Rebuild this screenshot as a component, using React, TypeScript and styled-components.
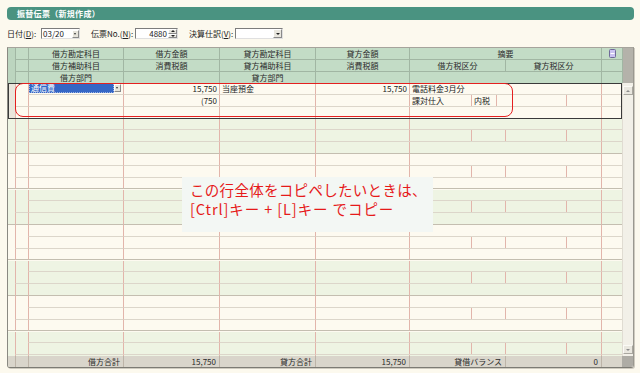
import styled, { createGlobalStyle } from "styled-components";

const GlobalStyle = createGlobalStyle`
  html, body {
    margin: 0;
    padding: 0;
    background: #fcf9ee;
  }
  body {
    font-family: "Noto Sans CJK JP", "Noto Sans", sans-serif;
    color: #222;
  }
`;

const COLS = "7px 13px 95px 96px 96px 94px 192px 21px";

type Entry = {
  debitAmt?: string;
  credit?: string;
  creditAmt?: string;
  memo?: string;
  taxAmt?: string;
  tax?: string;
  taxIn?: string;
};

const first: Entry = {
  debitAmt: "15,750",
  credit: "当座預金",
  creditAmt: "15,750",
  memo: "電話料金3月分",
  taxAmt: "(750",
  tax: "課対仕入",
  taxIn: "内税",
};

const Underline = ({ c }: { c: string }) => <u>{c}</u>;

const GroupRow = ({ entry, shade, selected }: { entry?: Entry; shade: boolean; selected?: boolean }) => (
  <Group $shade={shade} $selected={selected}>
    <Gutter $selected={selected} />
    <Mark $span />
    <Cell>
      {selected && (
        <Picker>
          <PickValue>通信費</PickValue>
          <DropBtn />
        </Picker>
      )}
    </Cell>
    <Cell $align="right">{entry?.debitAmt}</Cell>
    <Cell>{entry?.credit}</Cell>
    <Cell $align="right">{entry?.creditAmt}</Cell>
    <Cell>{entry?.memo}</Cell>
    <Cell />

    <Cell />
    <Cell $align="right">{entry?.taxAmt}</Cell>
    <Cell />
    <Cell />
    <Split>
      <SubCell $w={62}>{entry?.tax}</SubCell>
      <SubCell $w={selected ? 25 : 34}>{entry?.taxIn}</SubCell>
      <SubCell $w={selected ? 70 : 61} />
      <SubCell $w={35} />
    </Split>
    <Cell />

    <Mark $edge="group" />
    <Cell $edge="group" />
    <Cell $edge="group" />
    <Cell $edge="group" />
    <Cell $edge="group" />
    <Cell $edge="group" />
    <Cell $edge="group" />
  </Group>
);

export default function App() {
  const groups = [0, 1, 2, 3, 4, 5, 6, 7];
  return (
    <Page>
      <GlobalStyle />
      <TitleBar>振替伝票（新規作成）</TitleBar>

      <FormRow>
        <Label $w={34}>
          日付(<Underline c="D" />):
        </Label>
        <Input $w={39}>
          <InputText>03/20</InputText>
          <DropBtn />
        </Input>
        <Label $w={44} $gap={11}>
          伝票No.(<Underline c="N" />):
        </Label>
        <Input $w={43}>
          <InputText $align="right">4880</InputText>
          <Spinner>
            <SpinHalf>
              <Arrow $up />
            </SpinHalf>
            <SpinHalf>
              <Arrow />
            </SpinHalf>
          </Spinner>
        </Input>
        <Label $w={46} $gap={11}>
          決算仕訳(<Underline c="V" />):
        </Label>
        <Input $w={48}>
          <InputText />
          <SelectBtn>
            <Arrow />
          </SelectBtn>
        </Input>
      </FormRow>

      <Frame>
        <HeaderGrid>
          <HGutter />
          <HCell />
          <HCell>借方勘定科目</HCell>
          <HCell>借方金額</HCell>
          <HCell>貸方勘定科目</HCell>
          <HCell>貸方金額</HCell>
          <HCell>摘要</HCell>
          <HCell>
            <svg width="7" height="9" viewBox="0 0 7 9">
              <rect x="0.5" y="0.5" width="6" height="8" rx="1" fill="#cbc3f2" stroke="#6f6a98" />
              <line x1="1.5" y1="4.5" x2="5.5" y2="4.5" stroke="#ffffff" />
            </svg>
          </HCell>
          <HScroll />

          <HCell />
          <HCell>借方補助科目</HCell>
          <HCell>消費税額</HCell>
          <HCell>貸方補助科目</HCell>
          <HCell>消費税額</HCell>
          <HSplit>
            <HSub>借方税区分</HSub>
            <HSub>貸方税区分</HSub>
          </HSplit>
          <HCell />

          <HCell $last />
          <HCell $last>借方部門</HCell>
          <HCell $last />
          <HCell $last>貸方部門</HCell>
          <HCell $last />
          <HCell $last />
          <HCell $last />
        </HeaderGrid>

        <Body>
          <Rows>
            {groups.map((g) => (
              <GroupRow key={g} shade={g % 2 === 1} selected={g === 0} entry={g === 0 ? first : undefined} />
            ))}
          </Rows>
          <Scrollbar>
            <ScrollBtn>
              <Arrow $up $light />
            </ScrollBtn>
            <ScrollBtn>
              <Arrow $light />
            </ScrollBtn>
          </Scrollbar>
        </Body>

        <Footer>
          <FCell $noLine />
          <FCell />
          <FCell>借方合計</FCell>
          <FCell>15,750</FCell>
          <FCell>貸方合計</FCell>
          <FCell>15,750</FCell>
          <FCell>貸借バランス</FCell>
          <FCell>0</FCell>
          <FCell />
          <FScroll />
        </Footer>

        <Highlight />
        <Callout>
          <CalloutLine>この行全体をコピペしたいときは、</CalloutLine>
          <CalloutLine $wide>[Ctrl]キー + [L]キー でコピー</CalloutLine>
        </Callout>
      </Frame>
    </Page>
  );
}

const Page = styled.div`
  width: 640px;
  height: 373px;
  box-sizing: border-box;
  padding: 7px 6px 0 7px;
  overflow: hidden;
`;

const TitleBar = styled.div`
  height: 13px;
  width: 627px;
  border-radius: 4px;
  background: #4a9381;
  color: #fff;
  font-size: 8px;
  font-weight: bold;
  line-height: 13px;
  padding-left: 10px;
  box-sizing: border-box;
  letter-spacing: 0.3px;
`;

const FormRow = styled.div`
  display: flex;
  align-items: center;
  height: 11px;
  margin-top: 8px;
  font-size: 8px;
`;

const Label = styled.span<{ $w: number; $gap?: number }>`
  width: ${(p) => p.$w}px;
  margin-left: ${(p) => p.$gap || 0}px;
  white-space: nowrap;
  color: #222;
  line-height: 11px;
`;

const Input = styled.div<{ $w: number }>`
  width: ${(p) => p.$w}px;
  height: 11px;
  box-sizing: border-box;
  display: flex;
  background: #fff;
  border: 1px solid;
  border-color: #7c7c7c #e0e0e0 #e0e0e0 #7c7c7c;
`;

const InputText = styled.span<{ $align?: string }>`
  flex: 1;
  font-size: 8px;
  line-height: 9px;
  padding: 0 1px;
  text-align: ${(p) => p.$align || "left"};
`;

const DropBtn = styled.span`
  width: 7px;
  height: 8px;
  margin: 0 0 0 auto;
  align-self: center;
  box-sizing: border-box;
  background: #e6e4dc;
  border: 1px solid;
  border-color: #fff #8a8a8a #8a8a8a #fff;
  position: relative;
  &::after {
    content: "";
    position: absolute;
    left: 1px;
    top: 2px;
    border-left: 1.5px solid transparent;
    border-right: 1.5px solid transparent;
    border-top: 2px solid #333;
  }
`;

const Spinner = styled.div`
  width: 9px;
  display: flex;
  flex-direction: column;
`;

const SpinHalf = styled.div`
  flex: 1;
  display: flex;
  align-items: center;
  justify-content: center;
  background: #e8e6de;
  border: 1px solid;
  border-color: #fff #8a8a8a #8a8a8a #fff;
  box-sizing: border-box;
`;

const SelectBtn = styled.div`
  width: 9px;
  display: flex;
  align-items: center;
  justify-content: center;
  background: #e8e6de;
  border: 1px solid;
  border-color: #fff #8a8a8a #8a8a8a #fff;
  box-sizing: border-box;
`;

const Arrow = styled.span<{ $up?: boolean; $light?: boolean }>`
  width: 0;
  height: 0;
  border-left: 2px solid transparent;
  border-right: 2px solid transparent;
  ${(p) => (p.$up ? "border-bottom" : "border-top")}: 2px solid ${(p) => (p.$light ? "#8c8c8c" : "#222")};
`;

const Frame = styled.div`
  position: relative;
  margin-top: 8px;
  width: 627px;
  height: 321px;
  box-sizing: border-box;
  border-top: 1px solid #a6a49c;
  border-left: 1px solid #8a8982;
  border-right: 1px solid #9a9890;
  border-bottom: 1px solid #7c7b74;
  border-radius: 0 0 3px 3px;
  box-shadow: 1px 1px 0 #cfcbc0;
  display: flex;
  flex-direction: column;
`;

const HeaderGrid = styled.div`
  display: grid;
  grid-template-columns: ${COLS} 11px;
  grid-template-rows: 12px 12px 11px;
  background: #c3dcc6;
  font-size: 8px;
  color: #2a2a2a;
`;

const HGutter = styled.div`
  grid-row: span 3;
  background: #bcd5bf;
`;

const HCell = styled.div<{ $last?: boolean }>`
  border-left: 1px solid #a1b6a3;
  border-bottom: ${(p) => (p.$last ? "none" : "1px solid #a1b6a3")};
  display: flex;
  align-items: center;
  justify-content: center;
  line-height: 11px;
  white-space: nowrap;
  overflow: hidden;
`;

const HScroll = styled.div`
  grid-row: span 3;
  background: #b4b2aa;
  border-left: 1px solid #a1b6a3;
`;

const HSplit = styled.div`
  display: flex;
  border-bottom: 1px solid #a1b6a3;
`;

const HSub = styled.div`
  flex: 1;
  border-left: 1px solid #a1b6a3;
  display: flex;
  align-items: center;
  justify-content: center;
  white-space: nowrap;
`;

const Body = styled.div`
  display: flex;
  height: 273px;
`;

const Rows = styled.div`
  width: 614px;
  overflow: hidden;
  display: flex;
  flex-direction: column;
`;

const Group = styled.div<{ $shade: boolean; $selected?: boolean }>`
  flex-shrink: 0;
  height: 35.5px;
  box-sizing: border-box;
  display: grid;
  grid-template-columns: ${COLS};
  grid-template-rows: repeat(3, 1fr);
  background: ${(p) => (p.$shade ? "#eef4e3" : "#fdfaf0")};
  font-size: 8px;
  color: #222;
  ${(p) => p.$selected && "outline: 1px solid #3a3a3a; outline-offset: -1px;"}
`;

const Gutter = styled.div<{ $selected?: boolean }>`
  grid-row: span 3;
  border-bottom: 1px solid #c4beb0;
  background: ${(p) => (p.$selected ? "#e9e6dc" : "transparent")};
`;

const Mark = styled.div<{ $span?: boolean; $edge?: string }>`
  grid-row: ${(p) => (p.$span ? "span 2" : "auto")};
  border-left: 1px solid #e2b5ab;
  border-bottom: 1px solid ${(p) => (p.$edge === "group" ? "#c4beb0" : "#dcd6ca")};
`;

const Cell = styled.div<{ $edge?: string; $align?: string }>`
  border-left: 1px solid #e2b5ab;
  border-bottom: 1px solid ${(p) => (p.$edge === "group" ? "#c4beb0" : "#dcd6ca")};
  padding: 0 2px;
  text-align: ${(p) => p.$align || "left"};
  line-height: 11px;
  white-space: nowrap;
  overflow: hidden;
  display: flex;
  align-items: center;
  justify-content: ${(p) => (p.$align === "right" ? "flex-end" : "flex-start")};
`;

const Split = styled.div`
  display: flex;
  border-bottom: 1px solid #dcd6ca;
`;

const SubCell = styled.div<{ $w: number }>`
  width: ${(p) => p.$w}px;
  box-sizing: border-box;
  border-left: 1px solid #e2b5ab;
  padding: 0 2px;
  display: flex;
  align-items: center;
  white-space: nowrap;
  overflow: hidden;
`;

const Picker = styled.div`
  display: flex;
  align-items: center;
  width: 94px;
  height: 10px;
  margin-left: -2px;
`;

const PickValue = styled.span`
  flex: 1;
  height: 10px;
  background: #3466c5;
  color: #fff;
  line-height: 10px;
  padding-left: 2px;
  outline: 1px dotted #9db4e4;
  outline-offset: -1px;
`;

const Scrollbar = styled.div`
  width: 11px;
  box-sizing: border-box;
  border-left: 1px solid #e0dcd2;
  background: #f2f0e8;
  display: flex;
  flex-direction: column;
  justify-content: space-between;
  padding: 3px 0 2px 0;
`;

const ScrollBtn = styled.div`
  width: 10px;
  height: 9px;
  box-sizing: border-box;
  background: #e9e7df;
  border: 1px solid;
  border-color: #fbfaf6 #a9a79f #a9a79f #fbfaf6;
  display: flex;
  align-items: center;
  justify-content: center;
`;

const Footer = styled.div`
  display: grid;
  grid-template-columns: 7px 13px 95px 96px 96px 94px 96px 96px 21px 11px;
  height: 11px;
  background: #d9d5cb;
  font-size: 8px;
  color: #2a2a2a;
  border-radius: 0 0 2px 2px;
  overflow: hidden;
`;

const FCell = styled.div<{ $noLine?: boolean }>`
  border-left: ${(p) => (p.$noLine ? "none" : "1px solid #bdb4a8")};
  text-align: right;
  padding-right: 3px;
  line-height: 11px;
  white-space: nowrap;
`;

const FScroll = styled.div`
  background: #aeaca5;
`;

const Highlight = styled.div`
  position: absolute;
  left: 7px;
  top: 35px;
  width: 498px;
  height: 34px;
  box-sizing: border-box;
  border: 1px solid #e42020;
  border-radius: 8px;
  pointer-events: none;
`;

const Callout = styled.div`
  position: absolute;
  left: 174px;
  top: 129px;
  width: 251px;
  height: 55px;
  box-sizing: border-box;
  background: #f3f7f4;
  color: #e61a1a;
  font-size: 14.5px;
  padding: 4px 0 0 8px;
  white-space: nowrap;
  display: flex;
  flex-direction: column;
  gap: 1px;
`;

const CalloutLine = styled.div<{ $wide?: boolean }>`
  line-height: 18px;
  height: 18px;
  letter-spacing: ${(p) => (p.$wide ? "0.9px" : "0.3px")};
`;
